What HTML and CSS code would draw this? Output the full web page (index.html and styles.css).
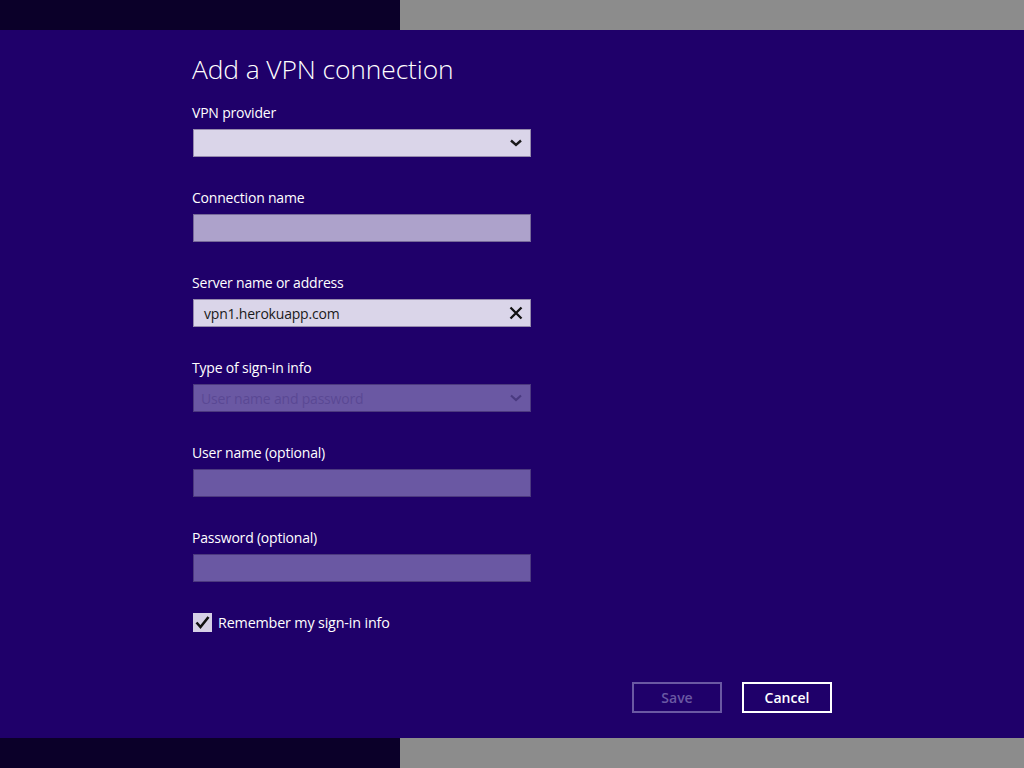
FILE: index.html
```html
<!DOCTYPE html>
<html>
<head>
<meta charset="utf-8">
<link rel="stylesheet" href="styles.css">
</head>
<body>
<div class="band"><div class="band-dark"></div><div class="band-gray"></div></div>
<main class="main">
  <div class="form">
    <h1 class="title">Add a VPN connection</h1>
    <div class="field">
      <div class="label">VPN provider</div>
      <div class="box box-light">
        <span class="val"></span>
        <svg class="icon" width="14" height="10" viewBox="0 0 14 10"><path d="M2 2.5 L7 7 L12 2.5" fill="none" stroke="#1a1a1a" stroke-width="2.4"/></svg>
      </div>
    </div>
    <div class="field">
      <div class="label">Connection name</div>
      <div class="box box-mid"></div>
    </div>
    <div class="field">
      <div class="label">Server name or address</div>
      <div class="box box-light">
        <span class="val">vpn1.herokuapp.com</span>
        <svg class="icon" width="14" height="14" viewBox="0 0 14 14"><path d="M1.5 1.5 L12.5 12.5 M12.5 1.5 L1.5 12.5" fill="none" stroke="#111" stroke-width="2.3"/></svg>
      </div>
    </div>
    <div class="field">
      <div class="label">Type of sign-in info</div>
      <div class="box box-dis">
        <span class="val dim">User name and password</span>
        <svg class="icon" width="14" height="10" viewBox="0 0 14 10"><path d="M2 2.5 L7 7 L12 2.5" fill="none" stroke="#4a3a80" stroke-width="2.2"/></svg>
      </div>
    </div>
    <div class="field">
      <div class="label">User name (optional)</div>
      <div class="box box-dis"></div>
    </div>
    <div class="field">
      <div class="label">Password (optional)</div>
      <div class="box box-dis"></div>
    </div>
    <div class="check-row">
      <span class="check">
        <svg width="19" height="19" viewBox="0 0 19 19"><path d="M3.5 9.5 L7.5 14 L15.5 4" fill="none" stroke="#111" stroke-width="2.6"/></svg>
      </span>
      <span class="check-label">Remember my sign-in info</span>
    </div>
  </div>
  <div class="buttons">
    <div class="btn btn-dis">Save</div>
    <div class="btn">Cancel</div>
  </div>
</main>
<div class="band"><div class="band-dark"></div><div class="band-gray"></div></div>
</body>
</html>
```
FILE: styles.css
```css
* { box-sizing: border-box; }
html, body { margin: 0; padding: 0; }
body {
  width: 1024px;
  height: 768px;
  display: flex;
  flex-direction: column;
  font-family: "Open Sans", "Noto Sans", sans-serif;
  color: #fff;
  overflow: hidden;
}
.band { height: 30px; display: flex; flex: none; }
.band-dark { width: 400px; background: #0b0029; }
.band-gray { flex: 1; background: #8c8c8c; }
.main {
  flex: 1;
  background: #1f006a;
  display: flex;
  flex-direction: column;
  padding: 0 192px;
  position: relative;
}
.form { width: 339px; display: flex; flex-direction: column; }
.title {
  font-weight: 300;
  font-size: 26.4px;
  margin: 22px 0 17px 0;
  line-height: 34px;
  letter-spacing: -0.1px;
}
.field { display: flex; flex-direction: column; margin-bottom: 31px; }
.label {
  font-size: 14px;
  line-height: 20px;
  margin-bottom: 6px;
  letter-spacing: -0.2px;
}
.box {
  height: 28px;
  margin-left: 1px;
  border: 1px solid rgba(20,0,60,0.35);
  display: flex;
  align-items: center;
  justify-content: space-between;
  padding: 0 7px 0 10px;
}
.box-light { background: #dad5e9; }
.box-mid { background: #ada2cb; }
.box-dis { background: #6a58a3; }
.val { color: #1a1a1a; font-size: 14px; letter-spacing: -0.2px; }
.val.dim { color: #5a4894; margin-left: -3px; }
.check-row { display: flex; align-items: center; margin-top: 0; margin-left: 1px; }
.check {
  width: 19px; height: 19px;
  background: #d6d0e6;
  display: flex;
}
.check-label { font-size: 14.3px; margin-left: 6px; letter-spacing: -0.15px; }
.buttons {
  display: flex;
  justify-content: flex-end;
  gap: 20px;
  margin-top: 50px;
}
.btn {
  width: 90px; height: 31px;
  border: 2px solid #fff;
  display: flex; align-items: center; justify-content: center;
  font-size: 14px; font-weight: 600;
}
.btn-dis { border-color: #6a58a3; color: #6a58a3; }
```
